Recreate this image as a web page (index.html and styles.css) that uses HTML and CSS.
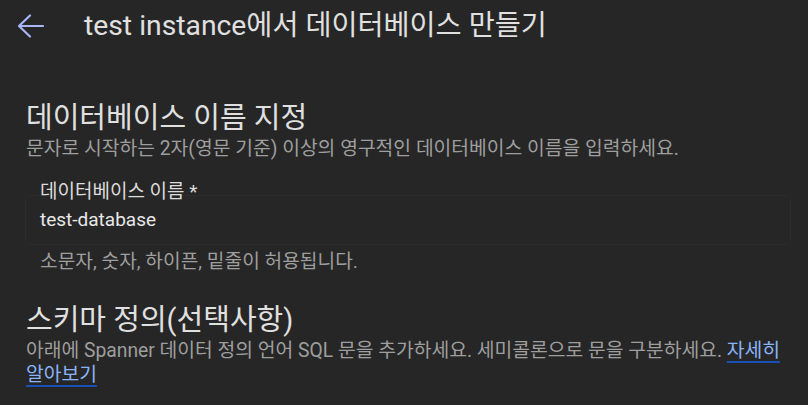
FILE: index.html
```html
<!DOCTYPE html>
<html lang="ko">
<head>
<meta charset="utf-8">
<link rel="stylesheet" href="styles.css">
</head>
<body>
<header class="topbar">
  <span class="back">
    <svg width="28" height="26" viewBox="0 0 28 26"><path d="M27 12H3.5M14 1.5L3 12L14 22.5" fill="none" stroke="currentColor" stroke-width="2.2" stroke-linecap="round" stroke-linejoin="round"/></svg>
  </span>
  <h1 class="title">test instance에서 데이터베이스 만들기</h1>
</header>
<main class="content">
  <section class="section">
    <h2 class="heading">데이터베이스 이름 지정</h2>
    <p class="desc">문자로 시작하는 2자(영문 기준) 이상의 영구적인 데이터베이스 이름을 입력하세요.</p>
    <div class="field">
      <label class="label">데이터베이스 이름 *</label>
      <div class="input">test-database</div>
      <div class="hint">소문자, 숫자, 하이픈, 밑줄이 허용됩니다.</div>
    </div>
  </section>
  <section class="section">
    <h2 class="heading">스키마 정의(선택사항)</h2>
    <p class="desc">아래에 Spanner 데이터 정의 언어 SQL 문을 추가하세요. 세미콜론으로 문을 구분하세요. <a class="link" href="#">자세히 알아보기</a></p>
  </section>
</main>
</body>
</html>
```
FILE: styles.css
```css
html, body {
  margin: 0;
  padding: 0;
  background: #262626;
  font-family: Roboto, "Noto Sans CJK KR", sans-serif;
  color: #e3e3e3;
}
.topbar {
  display: flex;
  align-items: center;
  height: 52px;
  padding-left: 16px;
}
.back {
  display: flex;
  width: 28px;
  height: 26px;
  color: #a8b5f7;
  margin-right: 40px;
  margin-top: 2px;
}
.title {
  margin: 0;
  font-size: 28.3px;
  font-weight: 400;
  line-height: 36px;
  color: #e0e0e0;
}
.content {
  padding: 48px 17px 0 26px;
}
.section + .section {
  margin-top: 28px;
}
.heading {
  margin: 0;
  font-size: 29px;
  font-weight: 400;
  line-height: 36px;
  color: #e0e0e0;
}
.desc {
  margin: 1px 0 0;
  font-size: 19.3px;
  line-height: 24px;
  color: #9e9e9e;
}
.field {
  margin-top: 19px;
}
.label {
  position: relative;
  z-index: 1;
  display: block;
  padding-left: 14px;
  font-size: 19px;
  line-height: 24px;
  color: #dcdcdc;
}
.input {
  margin-left: -1px;
  margin-top: -9px;
  padding: 0 14px;
  height: 50px;
  box-sizing: border-box;
  border: 1px solid #2c2c2c;
  border-radius: 6px;
  font-size: 19px;
  line-height: 48px;
  color: #e8e8e8;
}
.hint {
  margin-top: 5px;
  padding-left: 14px;
  font-size: 19.2px;
  line-height: 24px;
  color: #9e9e9e;
}
.link {
  color: #8ab4f8;
  text-decoration: underline;
  text-decoration-color: #1a4fb8;
  text-decoration-thickness: 2px;
  text-underline-offset: 4px;
}
```
